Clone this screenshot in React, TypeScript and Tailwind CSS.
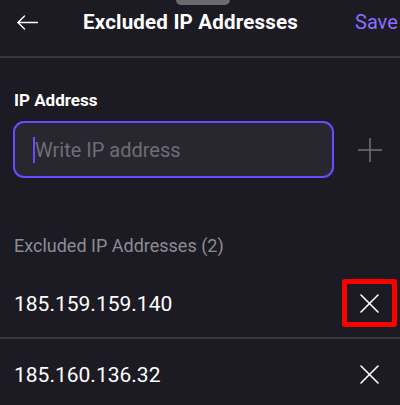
export default function App() {
  const ips = ["185.159.159.140", "185.160.136.32"]

  return (
    <div className="relative w-[400px] h-[405px] overflow-hidden bg-[#1c1b23] text-white font-['Roboto',sans-serif]">
      <div className="absolute left-[176px] top-0 h-[5px] w-[54px] rounded-b-full bg-[#6b6a70]" />

      <header className="flex h-[44px] items-center">
        <button className="ml-[17px] flex h-[44px] w-[21px] shrink-0 items-center">
          <svg width="21" height="15" viewBox="0 0 21 15" fill="none" stroke="currentColor" strokeWidth="1.4" strokeLinecap="round" strokeLinejoin="round">
            <path d="M20.5 7.5H1" />
            <path d="M7.5 1L1 7.5L7.5 14" />
          </svg>
        </button>
        <h1 className="ml-[45px] shrink-0 whitespace-nowrap text-[20.5px] font-bold tracking-[0.2px]">Excluded IP Addresses</h1>
        <span className="ml-auto w-[45px] shrink-0 whitespace-nowrap text-[20px] text-[#8a6eff]">Save</span>
      </header>
      <div className="mt-[12px] h-[2px] bg-[#37363d]" />

      <section className="pt-[30px]">
        <div className="px-[14px] text-[17px] font-bold leading-[24px]">IP Address</div>
        <div className="mt-[9px] flex items-center pl-[13px] pr-[3px]">
          <div className="flex h-[57px] w-[321px] items-center rounded-[11px] border-2 border-[#6d4aff] bg-[#28272f] pl-[18px]">
            <span className="h-[26px] w-[2px] bg-[#6d4aff]" />
            <span className="text-[20px] text-[#6e6d75]">Write IP address</span>
          </div>
          <div className="ml-auto flex w-[55px] justify-center">
            <svg width="24" height="24" viewBox="0 0 24 24" fill="none" stroke="#6e6d75" strokeWidth="1.6">
              <path d="M12 0V24" />
              <path d="M0 12H24" />
            </svg>
          </div>
        </div>
      </section>

      <section className="pt-[56px]">
        <div className="px-[14px] text-[18px] leading-[24px] text-[#8d8c93]">Excluded IP Addresses (2)</div>
        <ul className="mt-[11px]">
          {ips.map((ip, i) => (
            <li key={ip} className={"flex h-[70px] items-center pl-[14px] pr-[3px]" + (i === 0 ? " border-b-2 border-[#37363d]" : "")}>
              <span className="mt-[4px] text-[21px]">{ip}</span>
              <button
                className={
                  "ml-auto flex h-[48px] w-[55px] items-center justify-center rounded-[3px] " +
                  (i === 0 ? "border-[5px] border-[#ff0000]" : "")
                }
              >
                <svg width="19" height="19" viewBox="0 0 19 19" fill="none" stroke="#ffffff" strokeWidth="1.6" strokeLinecap="round">
                  <path d="M1 1L18 18" />
                  <path d="M18 1L1 18" />
                </svg>
              </button>
            </li>
          ))}
        </ul>
      </section>
    </div>
  )
}
